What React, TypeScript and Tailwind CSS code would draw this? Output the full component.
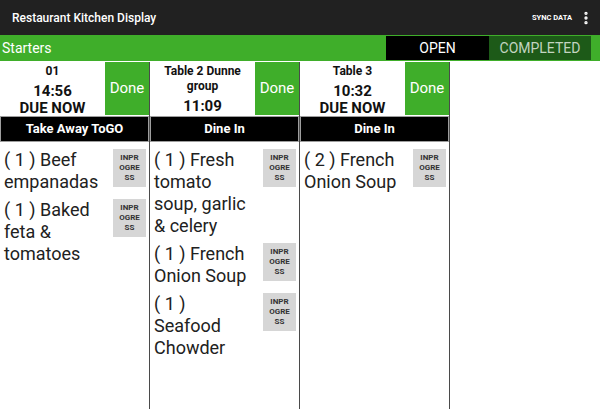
import { EllipsisVertical } from "lucide-react";

type Item = { qty: number; name: string };
type Ticket = {
  title: string;
  time: string;
  due: boolean;
  kind: string;
  items: Item[];
};

const tickets: Ticket[] = [
  {
    title: "01",
    time: "14:56",
    due: true,
    kind: "Take Away ToGO",
    items: [
      { qty: 1, name: "Beef empanadas" },
      { qty: 1, name: "Baked feta & tomatoes" },
    ],
  },
  {
    title: "Table 2 Dunne group",
    time: "11:09",
    due: false,
    kind: "Dine In",
    items: [
      { qty: 1, name: "Fresh tomato soup, garlic & celery" },
      { qty: 1, name: "French Onion Soup" },
      { qty: 1, name: "Seafood Chowder" },
    ],
  },
  {
    title: "Table 3",
    time: "10:32",
    due: true,
    kind: "Dine In",
    items: [{ qty: 2, name: "French Onion Soup" }],
  },
];

function TicketColumn({ ticket }: { ticket: Ticket }) {
  return (
    <div className="flex w-[150px] shrink-0 flex-col border-r border-[#4a4a4a]">
      <div className="flex h-[53px]">
        <div className="flex w-[105px] flex-col items-center pt-[2px] text-center font-bold text-[#111]">
          <div className="text-[12px] leading-[15px]">{ticket.title}</div>
          <div className="mt-[4px] text-[15px] leading-[17px]">{ticket.time}</div>
          {ticket.due && <div className="text-[15px] leading-[17px]">DUE NOW</div>}
        </div>
        <button className="flex flex-1 items-center justify-center bg-[#3fae2a] text-[15px] text-white">
          Done
        </button>
      </div>

      <div className="mt-[1px] flex h-[26px] items-center justify-center border border-[#9e9e9e] bg-black text-[13px] font-bold text-white">
        {ticket.kind}
      </div>

      <div className="pt-[7px]">
        {ticket.items.map((item, i) => (
          <div key={i} className="mb-[6px] flex items-start pl-[4px] pr-[3px]">
            <div className="w-[98px] text-[18px] leading-[22px] text-[#212121]">
              {`( ${item.qty} ) ${item.name}`}
            </div>
            <button className="ml-auto w-[33px] break-all bg-[#d6d6d6] px-[5px] py-[4px] text-center text-[8px] font-bold leading-[10px] text-[#333]">
              INPROGRESS
            </button>
          </div>
        ))}
      </div>
    </div>
  );
}

export default function App() {
  return (
    <div className="flex h-[409px] w-[600px] flex-col overflow-hidden bg-white font-[Roboto,sans-serif]">
      <div className="flex h-[35px] shrink-0 items-center justify-between bg-[#212121] pl-[12px] pr-[6px]">
        <span className="text-[12px] font-medium text-white">Restaurant Kitchen Display</span>
        <div className="flex items-center gap-[6px]">
          <span className="text-[7.5px] font-bold text-white">SYNC DATA</span>
          <EllipsisVertical size={16} strokeWidth={3} className="text-white" />
        </div>
      </div>

      <div className="flex h-[26px] shrink-0 items-center justify-between bg-[#3fae2a] pl-[2px] pr-[9px]">
        <span className="text-[14px] text-white">Starters</span>
        <div className="flex h-[24px]">
          <div className="flex w-[103px] items-center justify-center bg-black text-[14px] text-white">
            OPEN
          </div>
          <div className="flex w-[102px] items-center justify-center bg-[#1d5a18] text-[14px] text-[#c3d4c0]">
            COMPLETED
          </div>
        </div>
      </div>

      <div className="mt-[1px] flex flex-1">
        {tickets.map((t) => (
          <TicketColumn key={t.title} ticket={t} />
        ))}
      </div>
    </div>
  );
}
